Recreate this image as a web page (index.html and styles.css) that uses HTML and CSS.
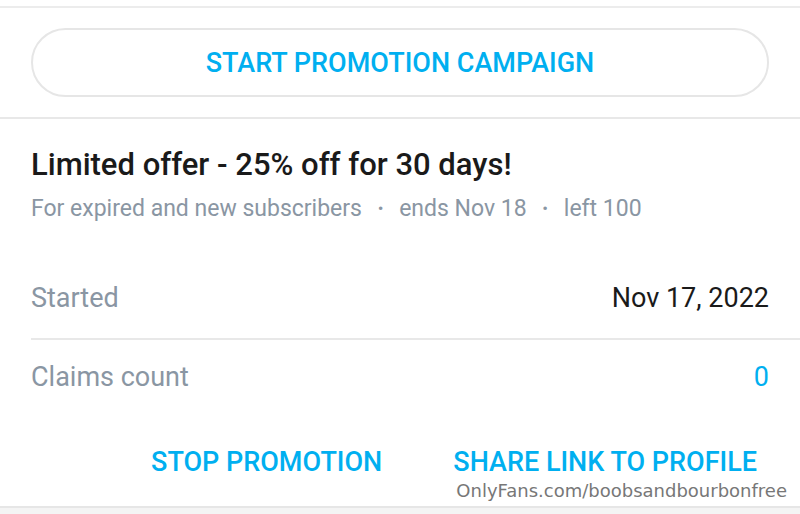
FILE: index.html
```html
<!DOCTYPE html>
<html lang="en">
<head>
    <meta charset="UTF-8">
    <meta name="viewport" content="width=device-width, initial-scale=1.0">
    <title>Promotion</title>
    <link rel="stylesheet" href="styles.css">
</head>
<body>
    <div class="top-edge"></div>
    <!--start campaign button-->
    <div class="start-block">
        <button type="button" class="pill-btn">START PROMOTION CAMPAIGN</button>
    </div>
    <!--current promotion card-->
    <section class="offer">
        <h1>Limited offer - 25% off for 30 days!</h1>
        <p class="meta">For expired and new subscribers <span class="dot">&bull;</span> ends Nov 18 <span class="dot">&bull;</span> left 100</p>
        <div class="row started">
            <span class="label">Started</span>
            <span class="value">Nov 17, 2022</span>
        </div>
        <div class="row claims">
            <span class="label">Claims count</span>
            <span class="value blue">0</span>
        </div>
        <div class="actions">
            <button type="button" class="text-btn">STOP PROMOTION</button>
            <button type="button" class="text-btn">SHARE LINK TO PROFILE</button>
        </div>
        <div class="watermark">OnlyFans.com/boobsandbourbonfree</div>
    </section>
    <div class="bottom-edge"></div>
</body>
</html>
```

FILE: styles.css
```css
/* promotion card styles */
body {
    margin: 0;
    background-color: #fff;
    font-family: Roboto, "Liberation Sans", sans-serif;
    color: #1a1a1a;
    width: 800px;
    height: 514px;
    overflow: hidden;
}
.top-edge {
    height: 6px;
    border-bottom: 2px solid #ececec;
}
.start-block {
    padding: 20px 31px 20px 31px;
    border-bottom: 2px solid #e8e8e8;
}
.pill-btn {
    display: block;
    width: 100%;
    height: 69px;
    border: 2px solid #e6e6e6;
    border-radius: 35px;
    background: #fff;
    color: #00aff0;
    font-family: inherit;
    font-size: 27px;
    font-weight: 500;
    cursor: pointer;
}
.offer {
    position: relative;
    padding: 0 0 0 31px;
    height: 387px;
}
h1 {
    margin: 0;
    padding-top: 28px;
    font-size: 31px;
    font-weight: 500;
    line-height: 36px;
}
.meta {
    margin: 11px 0 0 0;
    font-size: 23px;
    line-height: 28px;
    color: #8a96a3;
}
.dot {
    font-size: 17px;
    margin: 0 10px;
    vertical-align: 2px;
}
.row {
    display: flex;
    justify-content: space-between;
    align-items: center;
    padding-right: 31px;
    font-size: 27px;
}
.started {
    height: 80px;
    margin-top: 35px;
    border-bottom: 2px solid #e8e8e8;
}
.claims {
    height: 74px;
}
.label {
    color: #8a96a3;
}
.value {
    color: #1a1a1a;
}
.blue {
    color: #00aff0;
}
.actions {
    display: flex;
    justify-content: flex-end;
    gap: 71px;
    padding-right: 43px;
    margin-top: 32px;
}
.text-btn {
    border: none;
    background: none;
    padding: 0;
    color: #00aff0;
    font-family: inherit;
    font-size: 27px;
    font-weight: 500;
    line-height: 32px;
    cursor: pointer;
}
.watermark {
    position: absolute;
    right: 13px;
    bottom: 5px;
    font-family: "DejaVu Sans", sans-serif;
    font-size: 18px;
    color: #777;
}
.bottom-edge {
    border-top: 2px solid #e6e6e6;
    height: 8px;
    background-color: #f4f4f4;
}
```
